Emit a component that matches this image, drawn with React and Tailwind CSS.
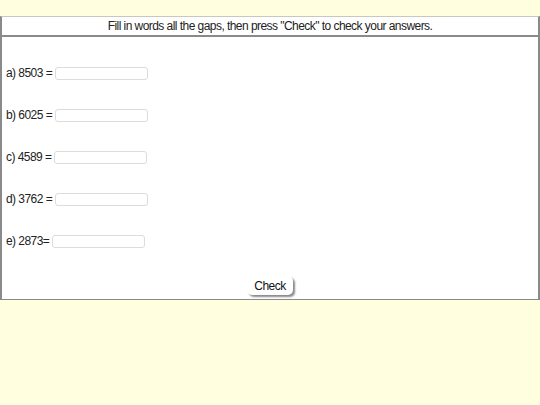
import React from 'react';

const items = [
  { label: 'a) 8503 =' },
  { label: 'b) 6025 =' },
  { label: 'c) 4589 =' },
  { label: 'd) 3762 =' },
  { label: 'e) 2873=' },
];

export default function App() {
  return (
    <div className="min-h-screen bg-[#ffffe0] pt-4 font-['Liberation_Sans',Arial,sans-serif] text-[12px] tracking-[-0.55px] text-[#222]">
      <div className="bg-white border-t border-t-[#c8c8c0] border-l-2 border-r-2 border-b border-[#8a8a8a]">
        <div className="h-[20px] flex items-center justify-center border-b-2 border-[#8a8a8a]">
          Fill in words all the gaps, then press "Check" to check your answers.
        </div>
        <div className="pt-[15px]">
          {items.map((item, idx) => (
            <div key={idx} className="h-[42px] flex items-center pl-[4px] gap-[3px]">
              <span>{item.label}</span>
              <input
                type="text"
                className="w-[93px] h-[13px] border border-[#dcdcdc] rounded-[3px] bg-white outline-none"
              />
            </div>
          ))}
          <div className="flex justify-center pt-[14px] pb-[4px]">
            <button className="h-[19px] px-[7px] bg-white rounded-[5px] text-[12px] tracking-[-0.55px] text-[#111] shadow-[2px_2px_2px_#8a8a8a]">
              Check
            </button>
          </div>
        </div>
      </div>
    </div>
  );
}
